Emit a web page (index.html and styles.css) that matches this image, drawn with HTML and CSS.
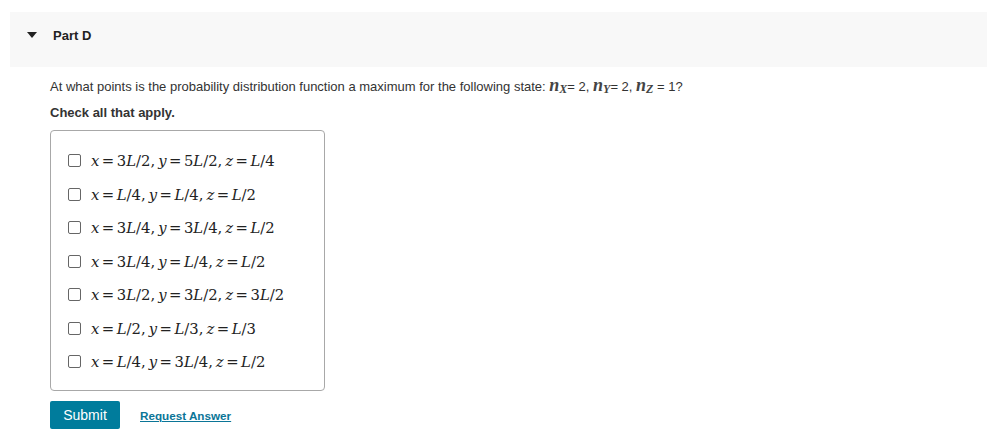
FILE: index.html
```html
<!DOCTYPE html>
<html>
<head>
    <title>Part D</title>
    <link rel="stylesheet" href="styles.css">
</head>
<body>
    <div class="part-head">
        <span class="caret"></span>
        <span class="part-title">Part D</span>
    </div>

    <div class="part-body">
        <p class="question">At what points is the probability distribution function a maximum for the following state: <span class="m"><i>n</i><sub><i>X</i></sub></span>= 2, <span class="m"><i>n</i><sub><i>Y</i></sub></span>= 2, <span class="m"><i>n</i><sub><i>Z</i></sub></span> = 1?</p>
        <p class="instructions">Check all that apply.</p>

        <div class="choices">
            <label class="choice"><span class="box"></span><span class="math"><i>x</i><b>=</b>3<i>L</i>/2<em>,</em><i>y</i><b>=</b>5<i>L</i>/2<em>,</em><i>z</i><b>=</b><i>L</i>/4</span></label>
            <label class="choice"><span class="box"></span><span class="math"><i>x</i><b>=</b><i>L</i>/4<em>,</em><i>y</i><b>=</b><i>L</i>/4<em>,</em><i>z</i><b>=</b><i>L</i>/2</span></label>
            <label class="choice"><span class="box"></span><span class="math"><i>x</i><b>=</b>3<i>L</i>/4<em>,</em><i>y</i><b>=</b>3<i>L</i>/4<em>,</em><i>z</i><b>=</b><i>L</i>/2</span></label>
            <label class="choice"><span class="box"></span><span class="math"><i>x</i><b>=</b>3<i>L</i>/4<em>,</em><i>y</i><b>=</b><i>L</i>/4<em>,</em><i>z</i><b>=</b><i>L</i>/2</span></label>
            <label class="choice"><span class="box"></span><span class="math"><i>x</i><b>=</b>3<i>L</i>/2<em>,</em><i>y</i><b>=</b>3<i>L</i>/2<em>,</em><i>z</i><b>=</b>3<i>L</i>/2</span></label>
            <label class="choice"><span class="box"></span><span class="math"><i>x</i><b>=</b><i>L</i>/2<em>,</em><i>y</i><b>=</b><i>L</i>/3<em>,</em><i>z</i><b>=</b><i>L</i>/3</span></label>
            <label class="choice"><span class="box"></span><span class="math"><i>x</i><b>=</b><i>L</i>/4<em>,</em><i>y</i><b>=</b>3<i>L</i>/4<em>,</em><i>z</i><b>=</b><i>L</i>/2</span></label>
        </div>

        <div class="actions">
            <button class="submit">Submit</button>
            <a href="#" class="request">Request Answer</a>
        </div>
    </div>
</body>
</html>
```

FILE: styles.css
```css
body {
    margin: 0;
    font-family: "Liberation Sans", Arial, sans-serif;
    color: #333;
    background: #fff;
}
.part-head {
    margin: 12px 10px 0 10px;
    height: 55px;
    background-color: #f8f8f8;
    display: flex;
    align-items: center;
    padding-left: 17px;
    padding-bottom: 9px;
    box-sizing: border-box;
}
.caret {
    width: 0;
    height: 0;
    border-left: 5px solid transparent;
    border-right: 5px solid transparent;
    border-top: 6px solid #222;
}
.part-title {
    margin-left: 16px;
    font-size: 13px;
    font-weight: bold;
    color: #222;
}
.part-body {
    padding-left: 50px;
}
.question {
    margin: 12px 0 0 0;
    font-size: 13px;
    line-height: 16px;
}
.question .m {
    font-family: "Liberation Serif", serif;
    font-size: 18px;
    font-weight: bold;
    color: #444;
    line-height: 10px;
}
.question sub {
    font-size: 12px;
    vertical-align: -2px;
}
.instructions {
    margin: 10px 0 0 0;
    font-size: 13px;
    line-height: 16px;
    font-weight: bold;
}
.choices {
    margin-top: 9px;
    width: 275px;
    border: 1px solid #a8a8a8;
    border-radius: 4px;
    padding: 13px 0 16px 17px;
    box-sizing: border-box;
    height: 261px;
}
.choice {
    display: flex;
    align-items: center;
    height: 33.5px;
}
.box {
    width: 11px;
    height: 11px;
    border: 1px solid #666;
    border-radius: 2px;
    margin-right: 10px;
}
.math {
    font-family: "DejaVu Serif", serif;
    font-size: 14.8px;
    color: #222;
}
.math i {
    font-style: italic;
}
.math b {
    font-weight: normal;
    margin: 0 2.5px;
}
.math em {
    font-style: normal;
    margin-right: 3px;
}
.actions {
    margin-top: 10px;
    display: flex;
    align-items: center;
}
.submit {
    width: 70px;
    height: 28px;
    background-color: #007c9c;
    color: #fff;
    border: none;
    border-radius: 2px;
    font-family: "Liberation Sans", Arial, sans-serif;
    font-size: 14px;
    cursor: pointer;
}
.request {
    margin-left: 20px;
    color: #0b7597;
    font-size: 11.7px;
    font-weight: bold;
    text-decoration: underline;
}
```
